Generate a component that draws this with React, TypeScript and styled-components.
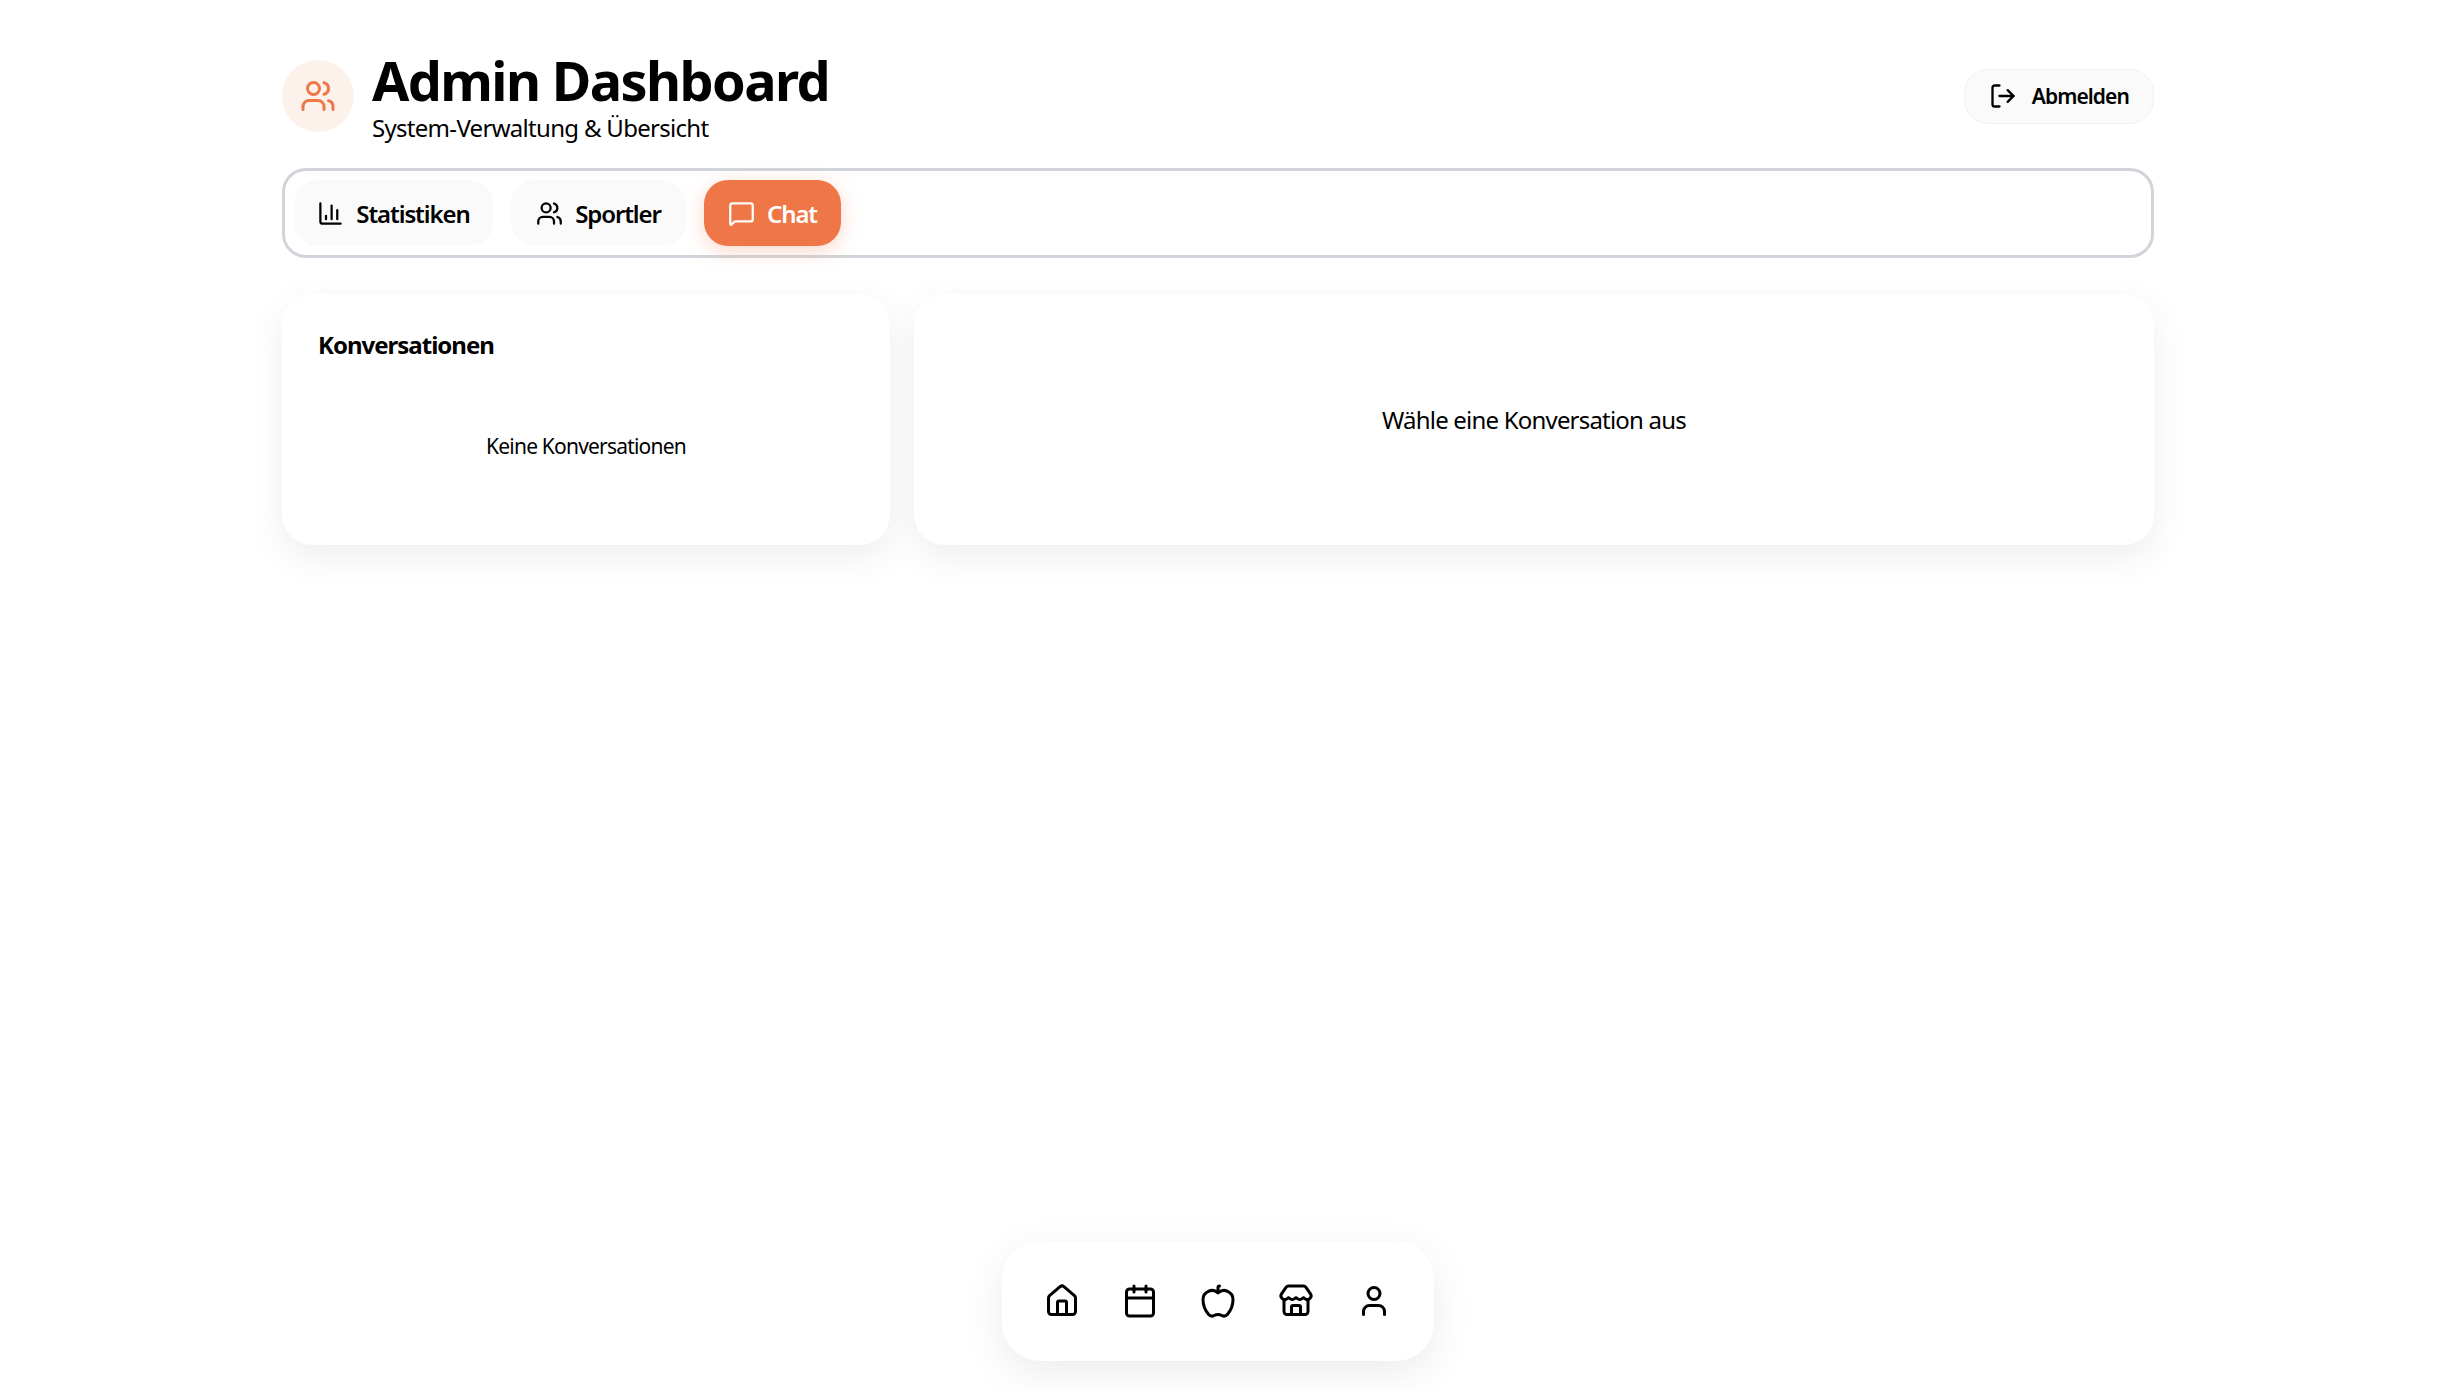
import React from 'react';
import styled, { createGlobalStyle } from 'styled-components';
import { Apple, Calendar, ChartColumn, House, LogOut, MessageSquare, Store, User, Users } from 'lucide-react';

const GlobalStyle = createGlobalStyle`
  html, body {
    margin: 0;
    padding: 0;
    height: 100%;
    background: #fff;
  }
  * { box-sizing: border-box; }
  body {
    padding-right: 3px;
    font-family: 'Noto Sans', 'Open Sans', sans-serif;
    color: #000;
  }
`;

const tabs = [
  { label: 'Statistiken', icon: ChartColumn, width: 199, active: false },
  { label: 'Sportler', icon: Users, width: 175, active: false },
  { label: 'Chat', icon: MessageSquare, width: 137, active: true },
];

const navItems = [House, Calendar, Apple, Store, User];

const App: React.FC = () => {
  return (
    <>
      <GlobalStyle />
      <Page>
        <Header>
          <TitleGroup>
            <Avatar>
              <Users size={36} />
            </Avatar>
            <TitleText>
              <Title>Admin Dashboard</Title>
              <Subtitle>System-Verwaltung &amp; Übersicht</Subtitle>
            </TitleText>
          </TitleGroup>
          <LogoutButton>
            <LogOut size={28} />
            Abmelden
          </LogoutButton>
        </Header>
        <TabBar>
          {tabs.map(({ label, icon: Icon, width, active }) => (
            <Tab key={label} $active={active} $width={width}>
              <Icon size={27} />
              {label}
            </Tab>
          ))}
        </TabBar>
        <Columns>
          <Card>
            <CardTitle>Konversationen</CardTitle>
            <EmptyList>Keine Konversationen</EmptyList>
          </Card>
          <ChatCard>Wähle eine Konversation aus</ChatCard>
        </Columns>
      </Page>
      <BottomNav>
        {navItems.map((Icon, i) => (
          <NavButton key={i}>
            <Icon size={36} />
          </NavButton>
        ))}
      </BottomNav>
    </>
  );
};

const Page = styled.div`
  width: 1872px;
  min-height: 100vh;
  margin: 0 auto;
  padding-top: 48px;
`;

const Header = styled.header`
  display: flex;
  align-items: center;
  justify-content: space-between;
  height: 96px;
  margin-bottom: 24px;
`;

const TitleGroup = styled.div`
  display: flex;
  align-items: center;
  gap: 18px;
`;

const TitleText = styled.div`
  margin-top: 3px;
`;

const Avatar = styled.div`
  display: flex;
  align-items: center;
  justify-content: center;
  width: 72px;
  height: 72px;
  border-radius: 50%;
  background: #fdf1ec;
  color: #ef7747;
`;

const Title = styled.h1`
  margin: 0;
  font-size: 54px;
  line-height: 60px;
  font-weight: 700;
  letter-spacing: -1.6px;
`;

const Subtitle = styled.p`
  margin: 0;
  font-size: 24px;
  line-height: 35px;
  letter-spacing: -0.7px;
`;

const LogoutButton = styled.button`
  display: flex;
  align-items: center;
  gap: 15px;
  height: 55px;
  padding: 0 24px;
  border: 1.5px solid #f1f1f1;
  border-radius: 24px;
  background: #fafafa;
  color: #000;
  font: 600 21px 'Noto Sans', sans-serif;
  letter-spacing: -0.9px;
`;

const TabBar = styled.nav`
  display: flex;
  gap: 18px;
  height: 90px;
  padding: 9px;
  border: 3px solid #d1d5db;
  border-radius: 24px;
  background: #fff;
`;

const Tab = styled.button<{ $active: boolean; $width: number }>`
  display: flex;
  align-items: center;
  justify-content: center;
  gap: 12px;
  width: ${({ $width }) => $width}px;
  height: 66px;
  padding: 0;
  border: none;
  border-radius: 24px;
  background: ${({ $active }) => ($active ? '#ef7747' : '#fafafa')};
  color: ${({ $active }) => ($active ? '#fff' : '#000')};
  box-shadow: ${({ $active }) => ($active ? '0 5px 20px rgba(239, 119, 71, 0.28)' : 'none')};
  font: 600 24px 'Noto Sans', sans-serif;
  letter-spacing: -1.1px;
`;

const Columns = styled.div`
  display: grid;
  grid-template-columns: repeat(3, 1fr);
  gap: 24px;
  margin-top: 36px;
`;

const Card = styled.section`
  height: 251px;
  padding: 35px 36px;
  border-radius: 30px;
  background: #fff;
  box-shadow: 0 12px 36px rgba(0, 0, 0, 0.07);
`;

const CardTitle = styled.h2`
  margin: 0;
  font-size: 24px;
  line-height: 32px;
  font-weight: 700;
  letter-spacing: -1px;
`;

const EmptyList = styled.p`
  margin: 70px 0 0;
  font-size: 21px;
  line-height: 30px;
  text-align: center;
  letter-spacing: -0.8px;
`;

const ChatCard = styled(Card)`
  grid-column: span 2;
  display: flex;
  align-items: center;
  justify-content: center;
  font-size: 24px;
  letter-spacing: -0.8px;
`;

const BottomNav = styled.nav`
  position: fixed;
  left: calc(50% - 217.5px);
  bottom: 30px;
  display: flex;
  gap: 6px;
  padding: 24px;
  border-radius: 38px;
  background: #fff;
  box-shadow: 0 12px 42px rgba(0, 0, 0, 0.08);
`;

const NavButton = styled.button`
  display: flex;
  align-items: center;
  justify-content: center;
  width: 72px;
  height: 72px;
  padding: 0;
  border: none;
  background: none;
  color: #000;
`;

export default App;
